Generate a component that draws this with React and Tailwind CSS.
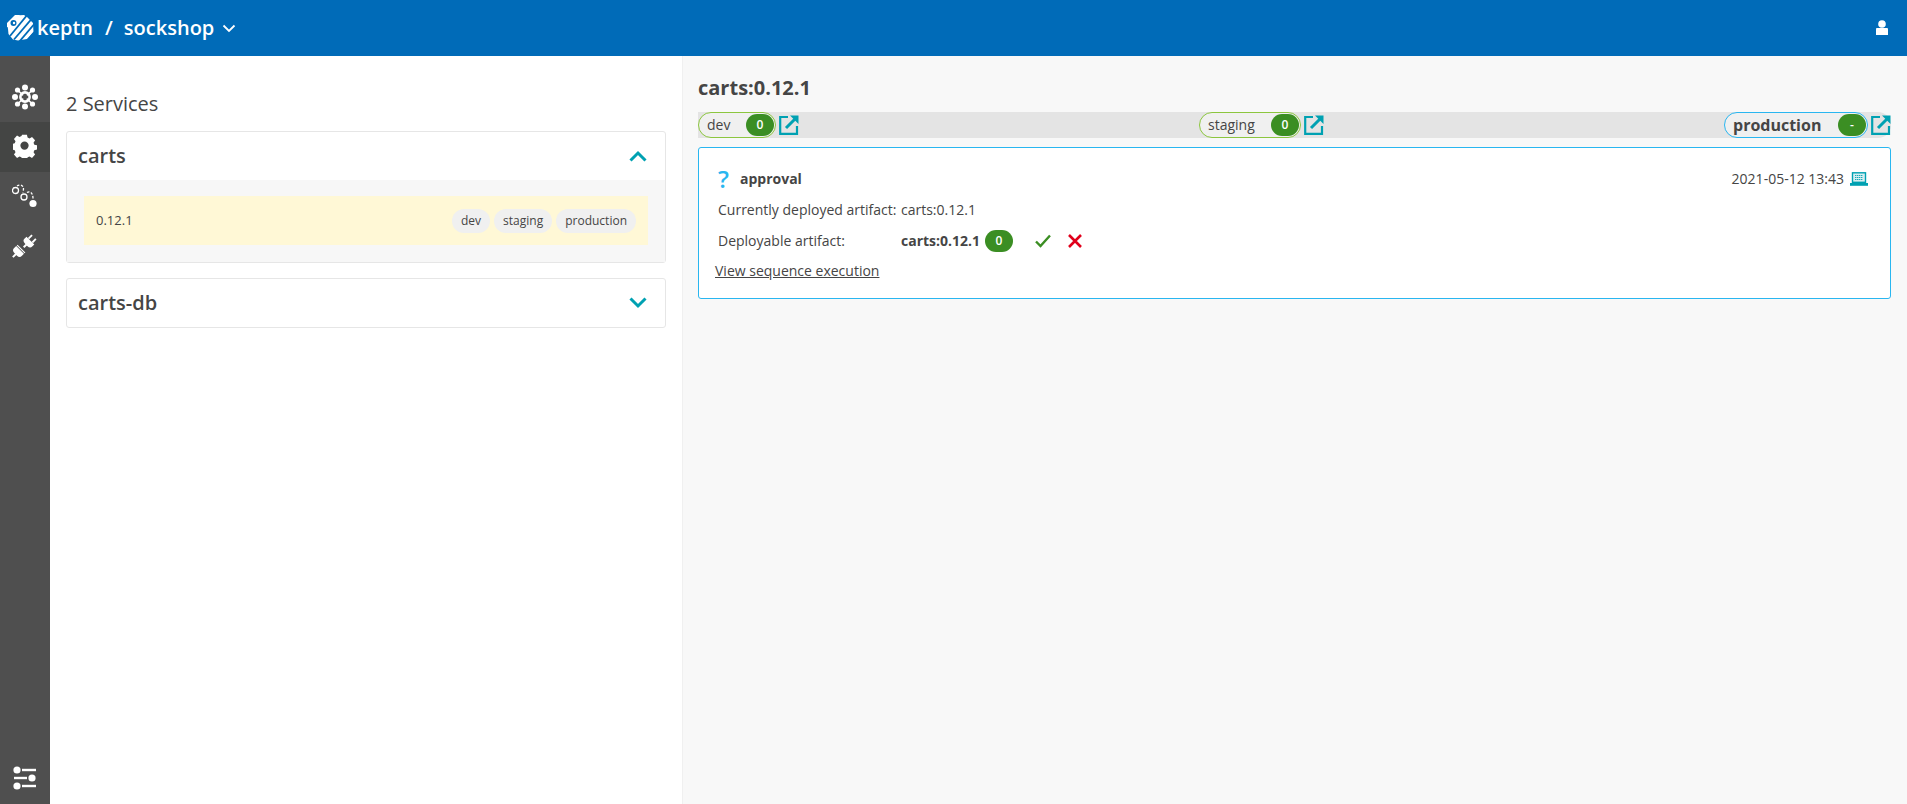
import React from "react";

const KeptnLogo = () => (
  <svg width="27" height="26" viewBox="0 0 27 26" className="shrink-0">
    <path d="M8.5 0.5L17 0L20.5 2.5L26 8L26.5 17L20 24L11 25.5L6 24.5L1.5 19L0.5 9Z" fill="white" />
    <g stroke="#006bb8" strokeWidth="1.8">
      <path d="M3 21L21 -1" />
      <path d="M7 24.5L27 1" />
      <path d="M12 27L29 7" />
      <path d="M19 27L30 14" />
    </g>
    <path d="M0 8L8 0L13 0L3 13L0 12Z" fill="white" />
    <circle cx="6.5" cy="8" r="3" fill="#006bb8" />
    <circle cx="7" cy="8" r="1.2" fill="white" />
  </svg>
);

const EnvIcon = () => (
  <svg width="26" height="26" viewBox="0 0 26 26" fill="white">
    <circle cx="13" cy="13" r="4.6" fill="none" stroke="white" strokeWidth="2.6" />
    <circle cx="13" cy="3.5" r="3" />
    <circle cx="13" cy="22.5" r="3" />
    <circle cx="3" cy="13" r="3" />
    <circle cx="23" cy="13" r="3" />
    <circle cx="5.5" cy="6" r="2.6" />
    <circle cx="20.5" cy="6" r="2.6" />
    <circle cx="5.5" cy="20" r="2.6" />
    <circle cx="20.5" cy="20" r="2.6" />
    <path d="M5.5 6L20.5 20M20.5 6L5.5 20" stroke="white" strokeWidth="1.6" />
    <circle cx="13" cy="13" r="2.4" fill="#4f4f4f" />
  </svg>
);

const GearIcon = () => (
  <svg width="24" height="24" viewBox="0 0 24 24" fill="white" className="-mt-[2px]">
    <path
      fillRule="evenodd"
      d="M9.5 0.8h5l.7 2.9 2 .9 2.6-1.5 3.2 3.5-1.6 2.5.8 2 2.8.7v4.4l-2.8.7-.8 2 1.6 2.5-3.2 3.5-2.6-1.5-2 .9-.7 2.9h-5l-.7-2.9-2-.9-2.6 1.5-3.2-3.5 1.6-2.5-.8-2-2.8-.7V10.3l2.8-.7.8-2-1.6-2.5 3.2-3.5 2.6 1.5 2-.9zM12 7.8a4.3 4.3 0 1 0 0 8.6 4.3 4.3 0 0 0 0-8.6z"
      transform="scale(0.96)"
    />
  </svg>
);

const SequenceIcon = () => (
  <svg width="26" height="26" viewBox="0 0 26 26" fill="none" stroke="white" strokeWidth="1.3">
    <circle cx="3.5" cy="6.5" r="3" />
    <circle cx="12" cy="13" r="3" />
    <path d="M5 2C8 0 11.5 1 11.5 5L11 8.5" strokeDasharray="2.5 1.6" />
    <path d="M15 8.5C18 6.5 21 9 21 14.5" strokeDasharray="2.5 1.6" />
    <circle cx="21" cy="19.5" r="3.6" fill="white" stroke="none" />
  </svg>
);

const PlugIcon = () => (
  <svg width="26" height="26" viewBox="0 0 26 26" fill="white">
    <g transform="translate(17 8) rotate(-45)">
      <path d="M2 -5.5V5.5H-1Q-4 5.5 -4 1.5V-1.5Q-4 -5.5 -1 -5.5Z" />
      <rect x="2" y="-3.6" width="5" height="1.8" />
      <rect x="2" y="1.8" width="5" height="1.8" />
      <rect x="-7.5" y="-1" width="4" height="2" />
    </g>
    <g transform="translate(6.5 17.5) rotate(-45)">
      <path d="M2.2 -5.5V5.5H-1Q-4 5.5 -4 1.5V-1.5Q-4 -5.5 -1 -5.5Z" />
      <rect x="3" y="-5.5" width="1.2" height="11" />
      <rect x="-8" y="-1" width="4.5" height="2" />
    </g>
  </svg>
);

const SlidersIcon = () => (
  <svg width="24" height="24" viewBox="0 0 24 24" fill="white">
    <circle cx="4" cy="4" r="3.6" />
    <rect x="9" y="2.8" width="14" height="2.4" />
    <rect x="1" y="10.8" width="13" height="2.4" />
    <circle cx="19" cy="12" r="3.6" />
    <circle cx="4" cy="20" r="3.6" />
    <rect x="9" y="18.8" width="14" height="2.4" />
  </svg>
);

const UserIcon = () => (
  <svg width="14" height="16" viewBox="0 0 14 16" fill="white">
    <circle cx="7" cy="4" r="3.8" />
    <path d="M1 9.2C1 8.5 1.5 8 2.2 8H11.8C12.5 8 13 8.5 13 9.2V15H1Z" />
  </svg>
);

const Chevron = ({ up }) => (
  <svg width="18" height="12" viewBox="0 0 18 12" fill="none" stroke="#00a1b2" strokeWidth="3">
    <path d={up ? "M1.5 10.5L9 3L16.5 10.5" : "M1.5 1.5L9 9L16.5 1.5"} />
  </svg>
);

const LinkIcon = () => (
  <svg width="20" height="20" viewBox="0 0 20 20" fill="none" className="shrink-0">
    <path d="M9 2H1.2V18.8H18V11" stroke="#00a1b2" strokeWidth="2.2" />
    <path d="M7 13L16 4" stroke="#00a1b2" strokeWidth="3" />
    <path d="M11 0.5H19.5V9Z" fill="#00a1b2" />
  </svg>
);

const LaptopIcon = () => (
  <svg width="18" height="14" viewBox="0 0 18 14" className="shrink-0">
    <rect x="2.5" y="0.8" width="13" height="9.5" fill="#d7eef1" stroke="#00a1b2" strokeWidth="1.4" />
    <path d="M5 3.5H13M5 5.5H13M5 7.5H13" stroke="#00a1b2" strokeWidth="0.9" strokeDasharray="1.4 0.6" />
    <path d="M0 11H18V13.8H0Z" fill="#00a1b2" />
  </svg>
);

const Stage = ({ name, count, active, width }) => (
  <div className="flex items-center gap-[3px]">
    <div
      className={
        "flex items-center justify-between h-[26px] rounded-full border bg-[#f0f0f0] pl-2 pr-px " +
        (active ? "border-[#29b6f0] font-bold text-[16px]" : "border-[#8cc63f] text-sm")
      }
      style={{ width }}
    >
      <span className="text-[#454545]">{name}</span>
      <span className="flex items-center justify-center w-7 h-[22px] rounded-full bg-[#3b8e23] text-white text-xs font-semibold">
        {count}
      </span>
    </div>
    <LinkIcon />
  </div>
);

const Tag = ({ children }) => (
  <span className="flex items-center h-6 px-[9px] rounded-full bg-[#f0f0f0] text-xs text-[#454545]">{children}</span>
);

export default function App() {
  return (
    <div className="flex flex-col h-[804px] w-[1907px] overflow-hidden text-[#454545] font-['Open_Sans',sans-serif]">
      <header className="flex items-center justify-between h-14 shrink-0 bg-[#006bb8] text-white pl-[7px] pr-[18px]">
        <div className="flex items-center">
          <KeptnLogo />
          <span className="ml-[3px] text-[20px] font-semibold">keptn</span>
          <span className="ml-[12px] text-[20px] font-semibold">/</span>
          <span className="ml-[11px] text-[20px] font-semibold">sockshop</span>
          <svg width="14" height="9" viewBox="0 0 14 9" fill="none" stroke="white" strokeWidth="1.8" className="ml-2">
            <path d="M1.5 1.5L7 7L12.5 1.5" />
          </svg>
        </div>
        <UserIcon />
      </header>

      <div className="flex flex-1 min-h-0">
        <nav className="flex flex-col w-[50px] shrink-0 bg-[#4f4f4f] pt-4">
          <div className="flex items-center justify-center h-[50px]"><EnvIcon /></div>
          <div className="flex items-center justify-center h-[50px] bg-[#444544]"><GearIcon /></div>
          <div className="flex items-center justify-center h-[50px]"><SequenceIcon /></div>
          <div className="flex items-center justify-center h-[50px]"><PlugIcon /></div>
          <div className="mt-auto flex items-center justify-center h-[50px] mb-px"><SlidersIcon /></div>
        </nav>

        <main className="w-[632px] shrink-0 bg-white px-4 pt-[34px]">
          <h2 className="text-[20px] leading-[28px] mb-[13px]">2 Services</h2>
          <section className="border border-[#e6e6e6] rounded-[3px] mb-[15px]">
            <div className="flex items-center justify-between h-[48px] pl-[11px] pr-[18px]">
              <span className="text-[20px] font-semibold">carts</span>
              <Chevron up />
            </div>
            <div className="bg-[#f7f7f7] px-[17px] pt-[16px] pb-[17px]">
              <div className="flex items-center justify-between h-[49px] bg-[#fff8d6] pl-3 pr-3">
                <span className="text-[13px]">0.12.1</span>
                <div className="flex items-center gap-1">
                  <Tag>dev</Tag>
                  <Tag>staging</Tag>
                  <Tag>production</Tag>
                </div>
              </div>
            </div>
          </section>
          <section className="border border-[#e6e6e6] rounded-[3px]">
            <div className="flex items-center justify-between h-[48px] pl-[11px] pr-[18px]">
              <span className="text-[20px] font-semibold">carts-db</span>
              <Chevron />
            </div>
          </section>
        </main>

        <div className="flex-1 min-w-0 bg-[#f8f8f8] pl-4 pr-4 pt-[18px] border-l border-[#f0f0f0]">
          <h1 className="text-[20px] leading-[28px] font-bold mb-[10px] -ml-px">carts:0.12.1</h1>
          <div className="flex items-center justify-between h-[26px] bg-[#e4e4e4] rounded-r-full -ml-px mb-[9px]">
            <Stage name="dev" count="0" width={78} />
            <Stage name="staging" count="0" width={102} />
            <Stage name="production" count="-" active width={144} />
          </div>
          <article className="flex flex-col h-[152px] bg-white border border-[#29b6f0] rounded-[3px] -ml-px pl-[19px] pr-[22px] pt-[19px] text-sm">
            <div className="flex items-center justify-between h-6">
              <div className="flex items-center">
                <span className="w-[22px] text-[#29b6f0] text-[24px] font-semibold leading-none">?</span>
                <span className="font-bold text-[#454545]">approval</span>
              </div>
              <div className="flex items-center gap-[6px]">
                <span>2021-05-12 13:43</span>
                <LaptopIcon />
              </div>
            </div>
            <div className="flex items-center h-[31px] mt-[3px]">
              <span className="w-[183px]">Currently deployed artifact:</span>
              <span>carts:0.12.1</span>
            </div>
            <div className="flex items-center h-[31px]">
              <span className="w-[183px]">Deployable artifact:</span>
              <span className="font-bold">carts:0.12.1</span>
              <span className="ml-[5px] flex items-center justify-center w-7 h-[22px] rounded-full bg-[#3b8e23] text-white text-xs font-semibold">0</span>
              <svg width="16" height="14" viewBox="0 0 16 14" fill="none" stroke="#3b8e23" strokeWidth="2.4" className="ml-[22px]">
                <path d="M1 7.5L5.5 12L15 1.5" />
              </svg>
              <svg width="14" height="14" viewBox="0 0 14 14" fill="none" stroke="#e0001b" strokeWidth="2.6" className="ml-[17px]">
                <path d="M1 1L13 13M13 1L1 13" />
              </svg>
            </div>
            <a className="underline -ml-[3px] w-fit leading-[29px]">View sequence execution</a>
          </article>
        </div>
      </div>
    </div>
  );
}
